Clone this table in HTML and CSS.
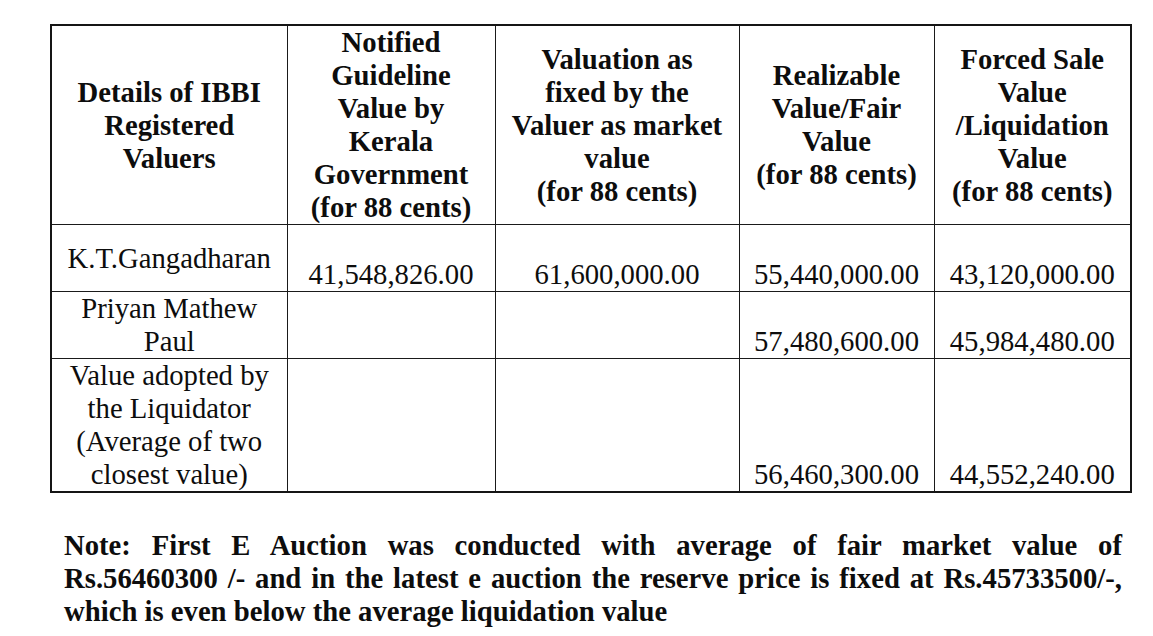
FILE: index.html
```html
<!DOCTYPE html>
<html lang="en">
<head>
<meta charset="utf-8">
<title>Valuation details</title>
<link rel="stylesheet" href="styles.css">
</head>
<body>
<div class="page">
  <table class="valuation">
    <colgroup>
      <col class="c1"><col class="c2"><col class="c3"><col class="c4"><col class="c5">
    </colgroup>
    <thead>
      <tr>
        <th>Details of IBBI<br>Registered<br>Valuers</th>
        <th>Notified<br>Guideline<br>Value by<br>Kerala<br>Government<br>(for 88 cents)</th>
        <th>Valuation as<br>fixed by the<br>Valuer as market<br>value<br>(for 88 cents)</th>
        <th>Realizable<br>Value/Fair<br>Value<br>(for 88 cents)</th>
        <th>Forced Sale<br>Value<br>/Liquidation<br>Value<br>(for 88 cents)</th>
      </tr>
    </thead>
    <tbody>
      <tr class="r1">
        <td class="name">K.T.Gangadharan</td>
        <td class="num">41,548,826.00</td>
        <td class="num">61,600,000.00</td>
        <td class="num">55,440,000.00</td>
        <td class="num">43,120,000.00</td>
      </tr>
      <tr>
        <td class="name">Priyan Mathew<br>Paul</td>
        <td class="num"></td>
        <td class="num"></td>
        <td class="num">57,480,600.00</td>
        <td class="num">45,984,480.00</td>
      </tr>
      <tr>
        <td class="name">Value adopted by<br>the Liquidator<br>(Average of two<br>closest value)</td>
        <td class="num"></td>
        <td class="num"></td>
        <td class="num">56,460,300.00</td>
        <td class="num">44,552,240.00</td>
      </tr>
    </tbody>
  </table>
  <p class="note">
    <span class="line">Note: First E Auction was conducted with average of fair market value of</span>
    <span class="line">Rs.56460300 /- and in the latest e auction the reserve price is fixed at Rs.45733500/-,</span>
    <span class="line last">which is even below the average liquidation value</span>
  </p>
</div>
</body>
</html>
```

FILE: styles.css
```css
html, body {
  margin: 0;
  background: #ffffff;
}

body {
  color: #0d0d0d;
  font-family: "Liberation Serif", "Times New Roman", serif;
}

.page {
  padding: 24px 0 0 50px;
}

.valuation {
  border-collapse: collapse;
  table-layout: fixed;
  width: 1082px;
  border: 2px solid #151515;
  font-size: 28.7px;
  line-height: 33px;
}

.c1 { width: 236px; }
.c2 { width: 208px; }
.c3 { width: 244px; }
.c4 { width: 195px; }
.c5 { width: 197px; }

.valuation th,
.valuation td {
  border: 1px solid #1a1a1a;
  padding: 0 4px;
  text-align: center;
}

.valuation th {
  font-weight: bold;
  vertical-align: middle;
}

.valuation td {
  font-weight: normal;
}

.valuation td.name {
  vertical-align: middle;
}

.valuation td.num {
  vertical-align: bottom;
}

.valuation tr.r1 td {
  height: 66px;
}

.note {
  margin: 36px 0 0 14px;
  width: 1058px;
  font-weight: bold;
  font-size: 28.7px;
  line-height: 33px;
}

.note .line {
  display: block;
  text-align: justify;
  text-align-last: justify;
}

.note .line.last {
  text-align-last: left;
}
```
